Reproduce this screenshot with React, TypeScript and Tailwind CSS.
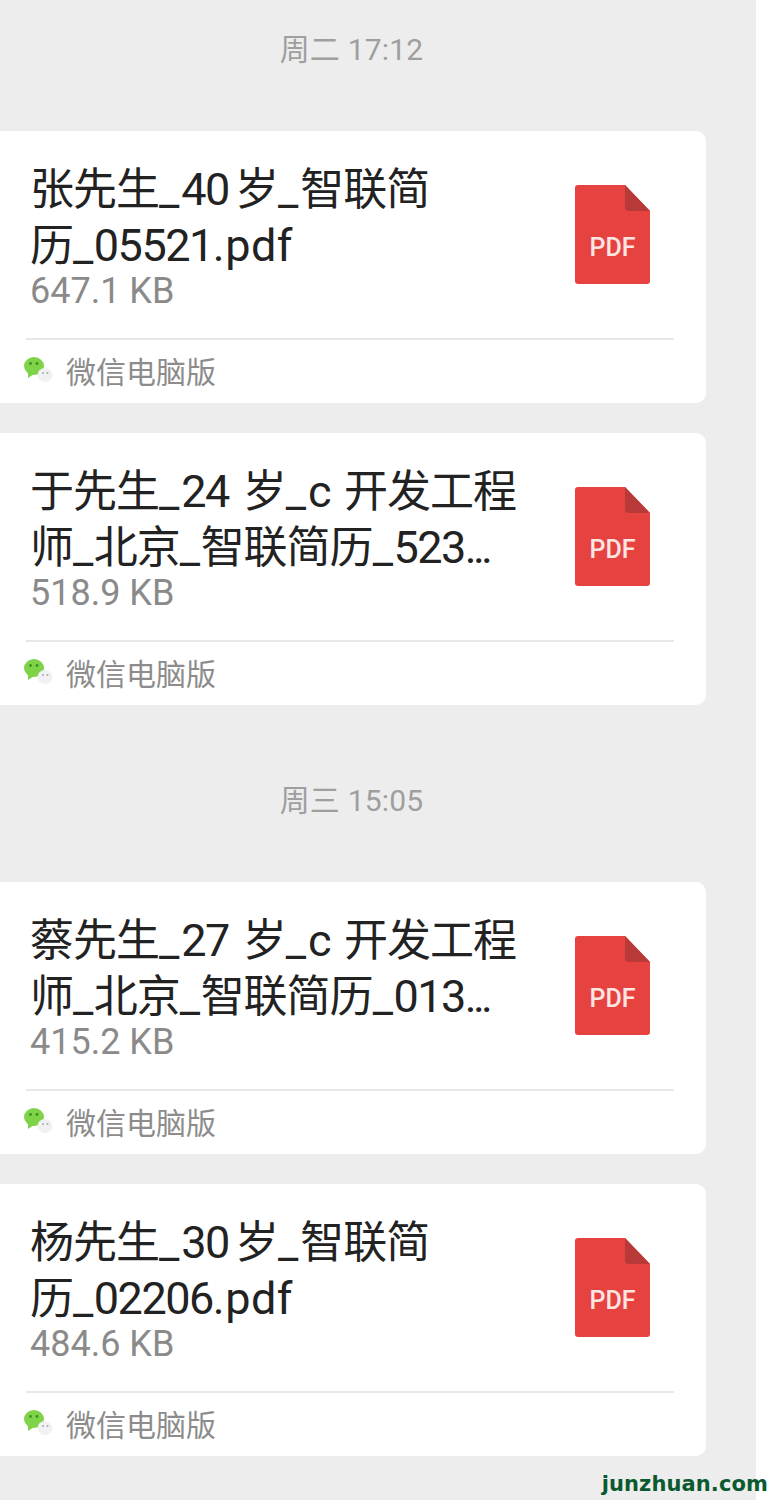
import React from 'react'

type FileCard = {
  lines: string[]
  size: string
}

function PdfIcon() {
  return (
    <div className="relative h-[100px] w-[75px] shrink-0">
      <svg viewBox="0 0 75 100" className="h-full w-full">
        <path d="M3 0H50L75 26V96a3 3 0 0 1-3 3H3a3 3 0 0 1-3-3V3a3 3 0 0 1 3-3Z" fill="#e64340" />
        <path d="M50 0L75 26H54a4 4 0 0 1-4-4Z" fill="#b83a38" />
      </svg>
      <span className="absolute left-0 right-0 top-[47px] text-center font-['Roboto',sans-serif] text-[25px] font-medium leading-[32px] text-[#fbe6e4]">PDF</span>
    </div>
  )
}

function WechatIcon() {
  return (
    <svg viewBox="0 0 30 28" className="h-[28px] w-[30px] shrink-0">
      <ellipse cx="11" cy="10" rx="10" ry="9" fill="#7ed348" />
      <path d="M5 15L5 22L11 18Z" fill="#7ed348" />
      <circle cx="7.5" cy="7.5" r="1.4" fill="#3f8f22" />
      <circle cx="14" cy="7.5" r="1.4" fill="#3f8f22" />
      <ellipse cx="22" cy="19" rx="7.5" ry="7" fill="#f1f1f3" />
      <circle cx="20" cy="17" r="1" fill="#a8a8a8" />
      <circle cx="24.5" cy="17" r="1" fill="#a8a8a8" />
    </svg>
  )
}

// the picture's font has other widths than Roboto, so each kind of run gets its own tracking
function tokenClass(part: string, prev: string) {
  if (part === '_') return prev.endsWith('生') || prev.endsWith('岁') ? 'tracking-[2px]' : 'tracking-[0.5px]'
  if (part === '...') return 'tracking-[-3.8px]'
  if (/^[0-9]/.test(part) || part.startsWith('c')) return 'tracking-[-1.5px]'
  return 'tracking-[0.5px]'
}

function TitleLine({ text }: { text: string }) {
  const parts = text.split(/(_|\.\.\.|[0-9\u2004\u2006]+|[a-z.\u2004]+)/)
  return (
    <div className="whitespace-pre">
      {parts.map((part, i) =>
        i % 2 === 1 ? (
          <span key={i} className={tokenClass(part, parts[i - 1])}>{part}</span>
        ) : (
          <span key={i} className="text-[44px] tracking-[-1px]">{part}</span>
        )
      )}
    </div>
  )
}

function Card({ file }: { file: FileCard }) {
  return (
    <div className="h-[272px] w-[706px] rounded-r-[10px] bg-white">
      <div className="flex h-[207px] items-start justify-between pl-[30px] pr-[56px] pt-[29px]">
        <div>
          <div className="pt-[2px] font-['Roboto','Noto_Sans_CJK_SC',sans-serif] text-[45px] leading-[56px] text-[#222222]">
            {file.lines.map((line) => (
              <TitleLine key={line} text={line} />
            ))}
          </div>
          <div className="-mt-[2px] font-['Roboto',sans-serif] text-[36px] leading-[38px] text-[#8a8a8a]">{file.size}</div>
        </div>
        <div className="pt-[25px]">
          <PdfIcon />
        </div>
      </div>
      <div className="ml-[26px] mr-[32px] h-[2px] bg-[#e8e8e8]"></div>
      <div className="flex items-center gap-[13px] pl-[23px] pt-[12px]">
        <WechatIcon />
        <span className="font-['Noto_Sans_CJK_SC',sans-serif] text-[30px] leading-[36px] text-[#8c8c8c]">微信电脑版</span>
      </div>
    </div>
  )
}

function TimeLabel({ text }: { text: string }) {
  return (
    <div className="text-center font-['Roboto','Noto_Sans_CJK_SC',sans-serif] text-[30px] leading-[40px] tracking-[0.2px] text-[#9f9f9f]">
      <span className="mr-[53px]">{text}</span>
    </div>
  )
}

const firstDay: FileCard[] = [
  { lines: ['张先生_40\u2006岁_智联简', '历_05521.pdf'], size: '647.1 KB' },
  { lines: ['于先生_24\u2004岁_c\u2004开发工程', '师_北京_智联简历_523...'], size: '518.9 KB' },
]

const secondDay: FileCard[] = [
  { lines: ['蔡先生_27\u2004岁_c\u2004开发工程', '师_北京_智联简历_013...'], size: '415.2 KB' },
  { lines: ['杨先生_30\u2006岁_智联简', '历_02206.pdf'], size: '484.6 KB' },
]

export default function App() {
  return (
    <div className="relative h-[1500px] w-[772px] overflow-hidden bg-white">
      <div className="h-full w-[756px] bg-[#ededed] pt-[30px]">
        <TimeLabel text="周二 17:12" />
        <div className="mt-[61px] flex flex-col gap-[30px]">
          {firstDay.map((file) => (
            <Card key={file.size} file={file} />
          ))}
        </div>
        <div className="mt-[76px]">
          <TimeLabel text="周三 15:05" />
        </div>
        <div className="mt-[61px] flex flex-col gap-[30px]">
          {secondDay.map((file) => (
            <Card key={file.size} file={file} />
          ))}
        </div>
      </div>
      <span className="absolute bottom-[3px] right-[4px] font-['DejaVu_Sans',sans-serif] text-[21px] font-bold leading-[26px] tracking-[0.1px] text-[#0b5a2f]">junzhuan.com</span>
    </div>
  )
}
